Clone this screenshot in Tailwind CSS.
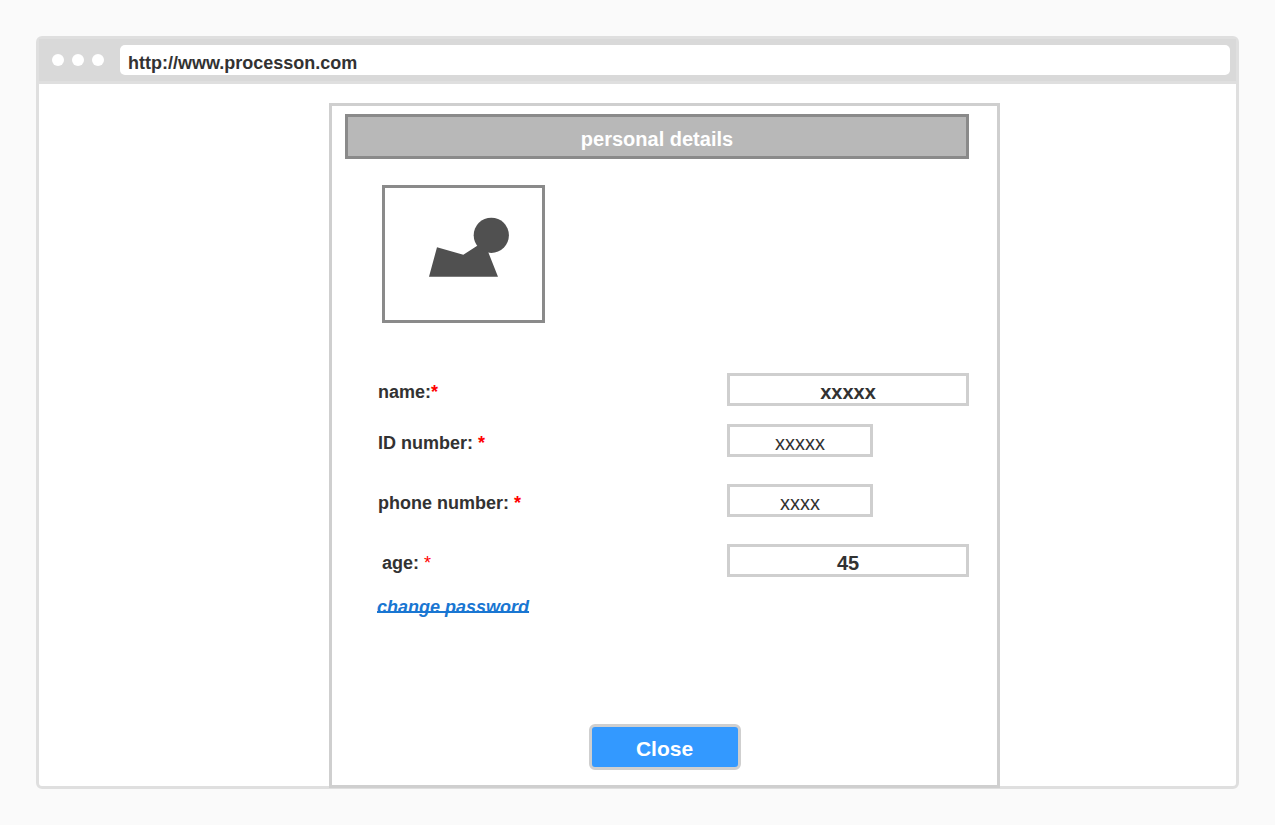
<!DOCTYPE html>
<html lang="en">
<head>
<meta charset="utf-8">
<meta name="viewport" content="width=device-width, initial-scale=1">
<title>Personal details</title>
<script src="https://cdn.jsdelivr.net/npm/@tailwindcss/browser@4"></script>
</head>
<body class="flex min-h-screen flex-col bg-[#fafafa] p-9 font-['Liberation_Sans',Arial,sans-serif] text-lg text-[#323232]">
  <div class="flex grow flex-col rounded-md border-3 border-[#dfdfdf] bg-white">
    <!-- Browser bar -->
    <header class="flex items-center gap-4 border-b-3 border-[#dfdfdf] bg-[#d9d9d9] py-1.5 pr-1.5 pl-[13px]">
      <div class="flex gap-2" aria-hidden="true">
        <span class="size-3 rounded-full bg-white"></span>
        <span class="size-3 rounded-full bg-white"></span>
        <span class="size-3 rounded-full bg-white"></span>
      </div>
      <input type="text" aria-label="Address" value="http://www.processon.com" class="h-[30px] min-w-0 grow rounded-[5px] bg-white px-2 pt-1.5 font-bold outline-none">
    </header>

    <main class="flex grow justify-center pt-[19px] pl-[54px]">
      <section class="-mb-0.5 flex w-full max-w-[671px] flex-col border-3 border-[#cfcfcf] bg-white pt-2 pb-[15px]" aria-labelledby="title">
        <div class="pr-7 pl-[13px]">
          <h1 id="title" class="border-3 border-[#8a8a8a] bg-[#b8b8b8] pt-2 pb-[3px] text-center text-xl font-bold text-white">personal details</h1>
        </div>

        <div class="mt-[26px] ml-[50px] h-[138px] w-[163px] border-3 border-[#8a8a8a]">
          <svg viewBox="0 0 157 132" class="size-full fill-[#505050]" role="img" aria-label="Photo">
            <path d="M52 59.3 78.3 66.7 95 56 103.3 64.3 113 88.7H44Z"/>
            <circle cx="106.3" cy="47.3" r="17.6"/>
          </svg>
        </div>

        <form class="mt-[50px] flex grow flex-col">
          <div class="flex flex-col gap-[27px] pr-7 pl-[46px] font-bold">
            <div class="flex flex-col gap-[18px]">
              <div class="flex items-center">
                <label for="name" class="w-[349px] pt-1">name:<span class="text-[#ff0000]">*</span></label>
                <input id="name" type="text" value="xxxxx" class="h-[33px] w-[242px] border-3 border-[#cfcfcf] pt-1.5 text-center text-xl outline-none">
              </div>
              <div class="flex items-center">
                <label for="idn" class="w-[349px] pt-1">ID number: <span class="text-[#ff0000]">*</span></label>
                <input id="idn" type="text" value="xxxxx" class="h-[33px] w-[146px] border-3 border-[#cfcfcf] pt-1.5 text-center text-xl font-normal outline-none">
              </div>
            </div>
            <div class="flex items-center">
              <label for="phone" class="w-[349px] pt-1">phone number: <span class="text-[#ff0000]">*</span></label>
              <input id="phone" type="text" value="xxxx" class="h-[33px] w-[146px] border-3 border-[#cfcfcf] pt-1.5 text-center text-xl font-normal outline-none">
            </div>
            <div class="flex items-center">
              <label for="age" class="w-[349px] pt-1 pl-1">age: <span class="font-normal text-[#ff0000]">*</span></label>
              <input id="age" type="text" value="45" class="h-[33px] w-[242px] border-3 border-[#cfcfcf] pt-1.5 text-center text-xl outline-none">
            </div>
          </div>
          <div class="mt-4 pl-[45px]">
            <a href="#" class="font-bold text-[#1976d2] italic underline decoration-2 underline-offset-[-2px] [text-decoration-skip-ink:none]">change password</a>
          </div>
          <div class="mt-auto flex justify-center">
            <button type="button" class="h-[46px] w-[152px] rounded-md border-3 border-[#cfcfcf] bg-[#3399ff] pt-1 text-[21px] font-bold text-white">Close</button>
          </div>
        </form>
      </section>
    </main>
  </div>
</body>
</html>
